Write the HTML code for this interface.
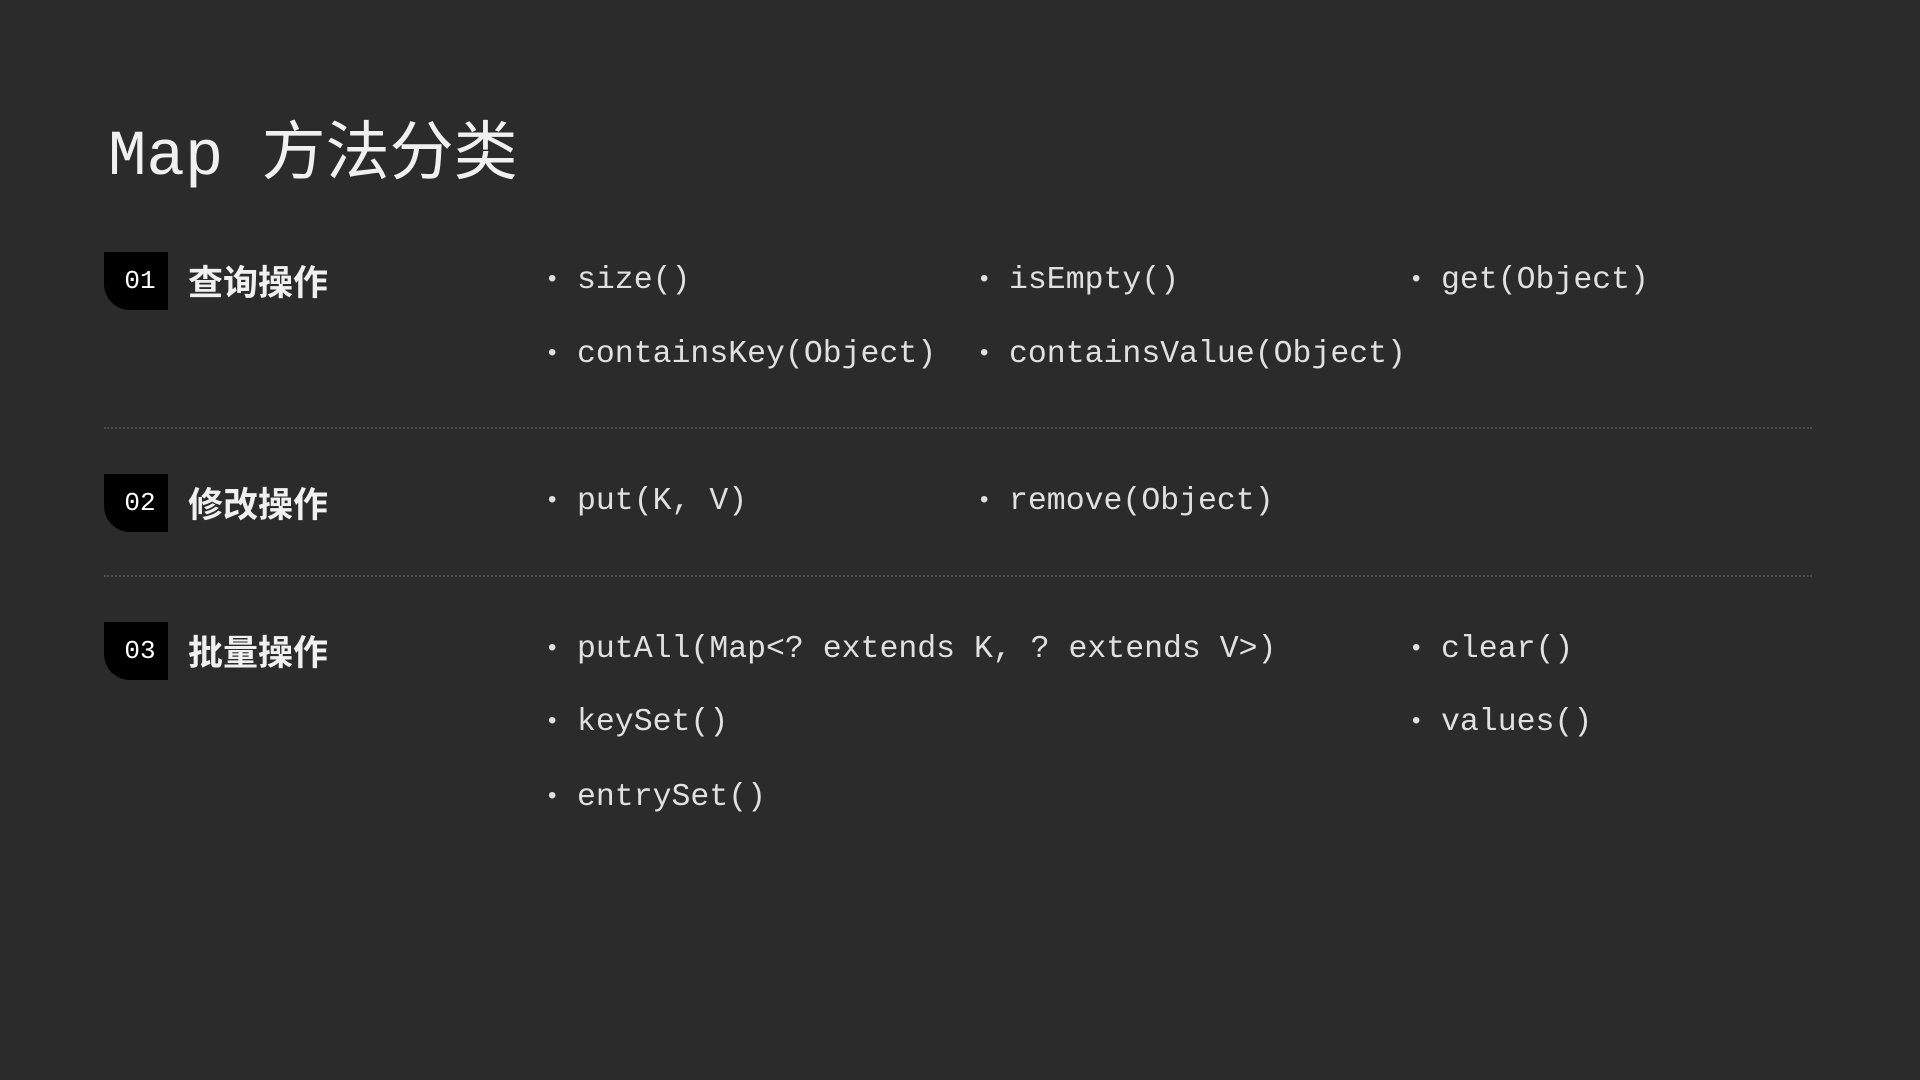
<!DOCTYPE html>
<html><head><meta charset="utf-8"><style>
body{margin:0;width:1920px;height:1080px;background:#2b2b2b;position:relative;overflow:hidden;font-family:"Liberation Mono","Noto Sans CJK SC",monospace;color:#e6e6e6}
.t{position:absolute;left:108px;top:103px;font-size:64px;line-height:88px;color:#f0f0f0;white-space:pre}
.b{position:absolute;left:104px;width:64px;height:58px;background:#000;border-bottom-left-radius:26px;color:#fff;font-size:26px;line-height:58px;text-align:center;box-sizing:border-box;padding-left:8px}
.l{position:absolute;left:188px;font-family:"Noto Sans CJK SC",sans-serif;font-size:35px;font-weight:bold;color:#f0f0f0;line-height:58px}
.i{position:absolute;font-size:31.5px;line-height:40px;color:#e0e0e0;white-space:pre}
.i:before{content:"•";position:absolute;left:-32px;font-size:24px}
.d{position:absolute;left:104px;width:1708px;border-top:2px dotted #4a4a4a}
</style></head><body>
<div class="t">Map <span style="font-family:'Noto Sans CJK SC',sans-serif">方法分类</span></div>

<div class="b" style="top:252px">01</div><div class="l" style="top:252px">查询操作</div>
<div class="i" style="left:577px;top:261px">size()</div>
<div class="i" style="left:1009px;top:261px">isEmpty()</div>
<div class="i" style="left:1441px;top:261px">get(Object)</div>
<div class="i" style="left:577px;top:335px">containsKey(Object)</div>
<div class="i" style="left:1009px;top:335px">containsValue(Object)</div>
<div class="d" style="top:427px"></div>

<div class="b" style="top:474px">02</div><div class="l" style="top:474px">修改操作</div>
<div class="i" style="left:577px;top:482px">put(K, V)</div>
<div class="i" style="left:1009px;top:482px">remove(Object)</div>
<div class="d" style="top:575px"></div>

<div class="b" style="top:622px">03</div><div class="l" style="top:622px">批量操作</div>
<div class="i" style="left:577px;top:630px">putAll(Map&lt;? extends K, ? extends V&gt;)</div>
<div class="i" style="left:1441px;top:630px">clear()</div>
<div class="i" style="left:577px;top:703px">keySet()</div>
<div class="i" style="left:1441px;top:703px">values()</div>
<div class="i" style="left:577px;top:778px">entrySet()</div>
</body></html>
